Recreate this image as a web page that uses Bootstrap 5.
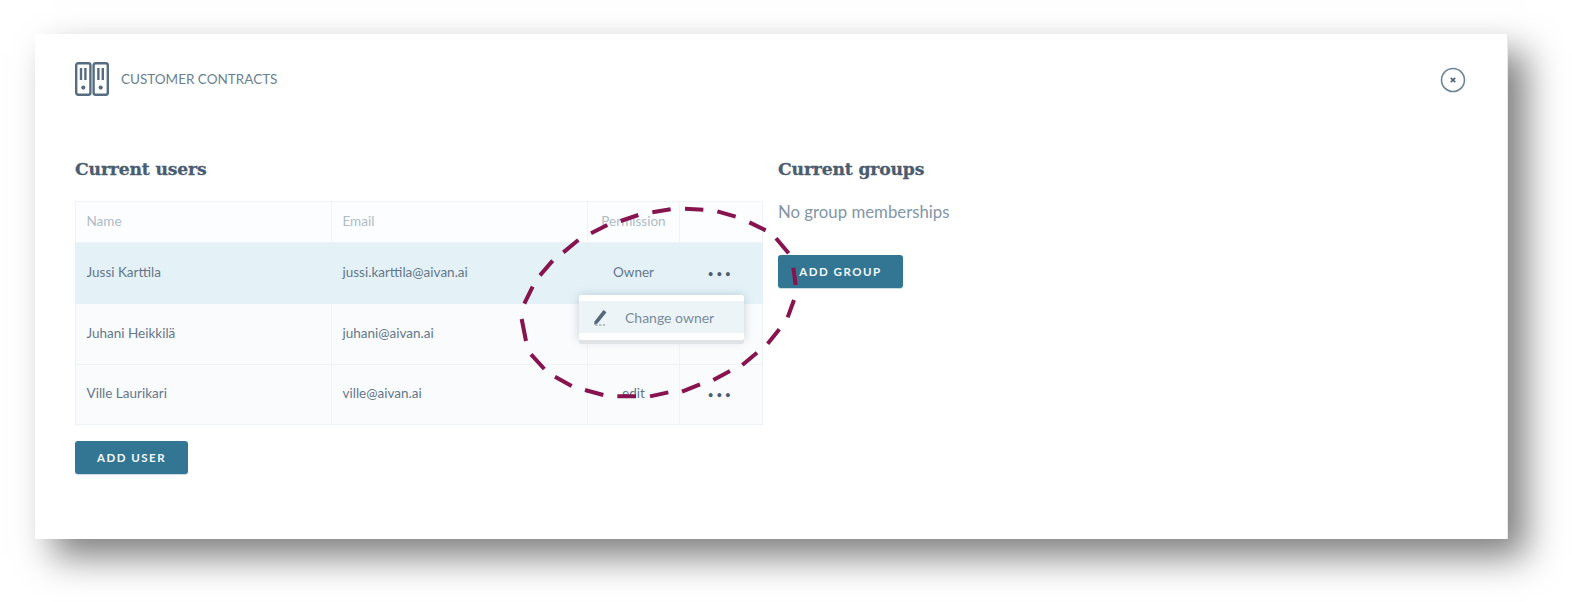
<!DOCTYPE html>
<html lang="en">
<head>
<meta charset="utf-8">
<title>Customer contracts</title>
<link href="https://cdn.jsdelivr.net/npm/bootstrap@5.3.0/dist/css/bootstrap.min.css" rel="stylesheet">
<style>
html,body{height:602px;overflow:hidden;background:#fff}
body{font-family:"Lato","Open Sans",sans-serif;color:#50657a}
.stage{padding:34px 64px 60px 35px}
.sheet{position:relative;height:505px;padding:28px 40px 0 40px;background:#fff;box-shadow:18px 18px 34px rgba(0,0,0,.5);border-right:1px solid #e3ebf0}
.sheet-head{height:33px}
.sheet-title{font-size:13.5px;color:#6a8093;letter-spacing:0;position:relative;top:1px}
.close-ring{margin-right:1px;margin-top:3px}
.cols{margin-top:62px;gap:16px}
.users{width:687px}
.groups{width:300px}
.slab{font-family:"DejaVu Serif",serif;font-weight:700;font-size:17.2px;line-height:24px;color:#4a5d70;margin:0 0 20px;letter-spacing:-.15px;-webkit-text-stroke:.3px #4a5d70}
.user-table{table-layout:fixed;width:687px;margin:0;border-collapse:collapse;font-size:13.5px}
.user-table th,.user-table td{border:1px solid #edf3f6;padding:0 10.5px 2px;vertical-align:middle;background:#f9fbfd;color:#64778a;font-weight:400;box-shadow:none}
.user-table th{height:41px;color:#aebbc6;background:#fcfdfe}
.user-table td{height:61px}
.user-table tr:last-child td{height:60px}
.user-table tr.picked td{background:#e4f2f8;border-color:#e4f2f8}
.user-table .mid{text-align:center;padding:0 0 2px}
.dots{letter-spacing:3.4px;font-weight:700;font-size:9px;color:#4e5f6f;line-height:1}
.act{background:#337693;color:#f4f8fa;font-size:11.5px;font-weight:700;letter-spacing:1.5px;height:33px;border:0;border-radius:3px;padding:0;text-transform:uppercase;box-shadow:0 1px 1px #c9d6de}
.act:hover{background:#337693;color:#fff}
.act-user{width:113px;margin-top:16px}
.act-group{width:125px;margin-top:31px}
.nogroup{font-size:16.8px;font-weight:400;color:#8396a6;line-height:24px;margin:-1px 0 0}
.pop{position:absolute;left:544px;top:261px;width:165px;background:#fff;padding:6px 0 7px;box-shadow:0 4px 0 #dfe3e6,0 0 10px rgba(90,110,125,.3);border-radius:2px}
.pop-item{height:32px;background:#ecf4f8;font-size:14px;color:#7a8c9c;padding-left:14px;gap:16px}
.scribble{position:absolute;left:475px;top:161px;width:300px;height:215px;pointer-events:none}
</style>
</head>
<body>
<div class="stage">
  <div class="sheet">
    <div class="sheet-head d-flex align-items-center justify-content-between">
      <div class="d-flex align-items-center gap-2">
        <svg width="34" height="34" viewBox="0 0 34 34" fill="none" stroke="#566d81" stroke-width="2.4"><rect x="1.2" y="1.2" width="14.2" height="31.6" rx="2"/><rect x="18.6" y="1.2" width="14.2" height="31.6" rx="2"/><path d="M6 6v12M10.4 6v12M23.4 6v12M27.8 6v12"/><circle cx="8.3" cy="25.6" r="2.1" fill="#566d81" stroke="none"/><circle cx="25.7" cy="25.6" r="2.1" fill="#566d81" stroke="none"/></svg>
        <span class="sheet-title ms-1 text-uppercase">Customer contracts</span>
      </div>
      <svg class="close-ring" width="26" height="26" viewBox="0 0 26 26" fill="none"><circle cx="13" cy="13" r="11.5" stroke="#6c8699" stroke-width="1.6"/><path d="M10.8 10.8l4.4 4.4M15.2 10.8l-4.4 4.4" stroke="#50677c" stroke-width="1.7"/></svg>
    </div>
    <div class="cols d-flex">
      <div class="users">
        <h2 class="slab">Current users</h2>
        <table class="table user-table">
          <colgroup><col style="width:256px"><col style="width:256px"><col style="width:92px"><col style="width:83px"></colgroup>
          <thead><tr><th>Name</th><th>Email</th><th class="mid">Permission</th><th></th></tr></thead>
          <tbody>
            <tr class="picked"><td>Jussi Karttila</td><td>jussi.karttila@aivan.ai</td><td class="mid">Owner</td><td class="mid"><span class="dots">•••</span></td></tr>
            <tr><td>Juhani Heikkilä</td><td>juhani@aivan.ai</td><td class="mid"></td><td class="mid"></td></tr>
            <tr><td>Ville Laurikari</td><td>ville@aivan.ai</td><td class="mid">edit</td><td class="mid"><span class="dots">•••</span></td></tr>
          </tbody>
        </table>
        <button class="btn act act-user" type="button">Add user</button>
      </div>
      <div class="groups">
        <h2 class="slab">Current groups</h2>
        <p class="nogroup">No group memberships</p>
        <button class="btn act act-group" type="button">Add group</button>
      </div>
    </div>
    <div class="pop">
      <div class="pop-item d-flex align-items-center">
        <svg width="16" height="18" viewBox="0 0 16 18" fill="none"><path d="M1.5 13.5L10.5 2l3 2.3L4.5 15.6l-3.4.8z" fill="#55687a"/><path d="M2 17h2.5M6 17h2.5M10 17h2" stroke="#7d8d9b" stroke-width="1"/></svg>
        <span>Change owner</span>
      </div>
    </div>
    <svg class="scribble" viewBox="0 0 900 645" fill="none" stroke="#87144f" stroke-width="12"><path d="M243 115L292 90M332 78L385 60M427 52L482 43M525 41L580 44M622 49L677 65M718 82L767 106M798 130L836 175M850 218L857 270M852 315L833 367M808 403L773 446M741 473L697 510M660 528L610 555M570 568L516 590M475 592L420 604M378 604L322 604M280 600L225 585M185 573L135 545M103 522L63 478M48 438L35 372M43 326L68 275M90 241L128 197M160 172L205 135"/></svg>
  </div>
</div>
<script src="https://cdn.jsdelivr.net/npm/bootstrap@5.3.0/dist/js/bootstrap.bundle.min.js"></script>
</body>
</html>
